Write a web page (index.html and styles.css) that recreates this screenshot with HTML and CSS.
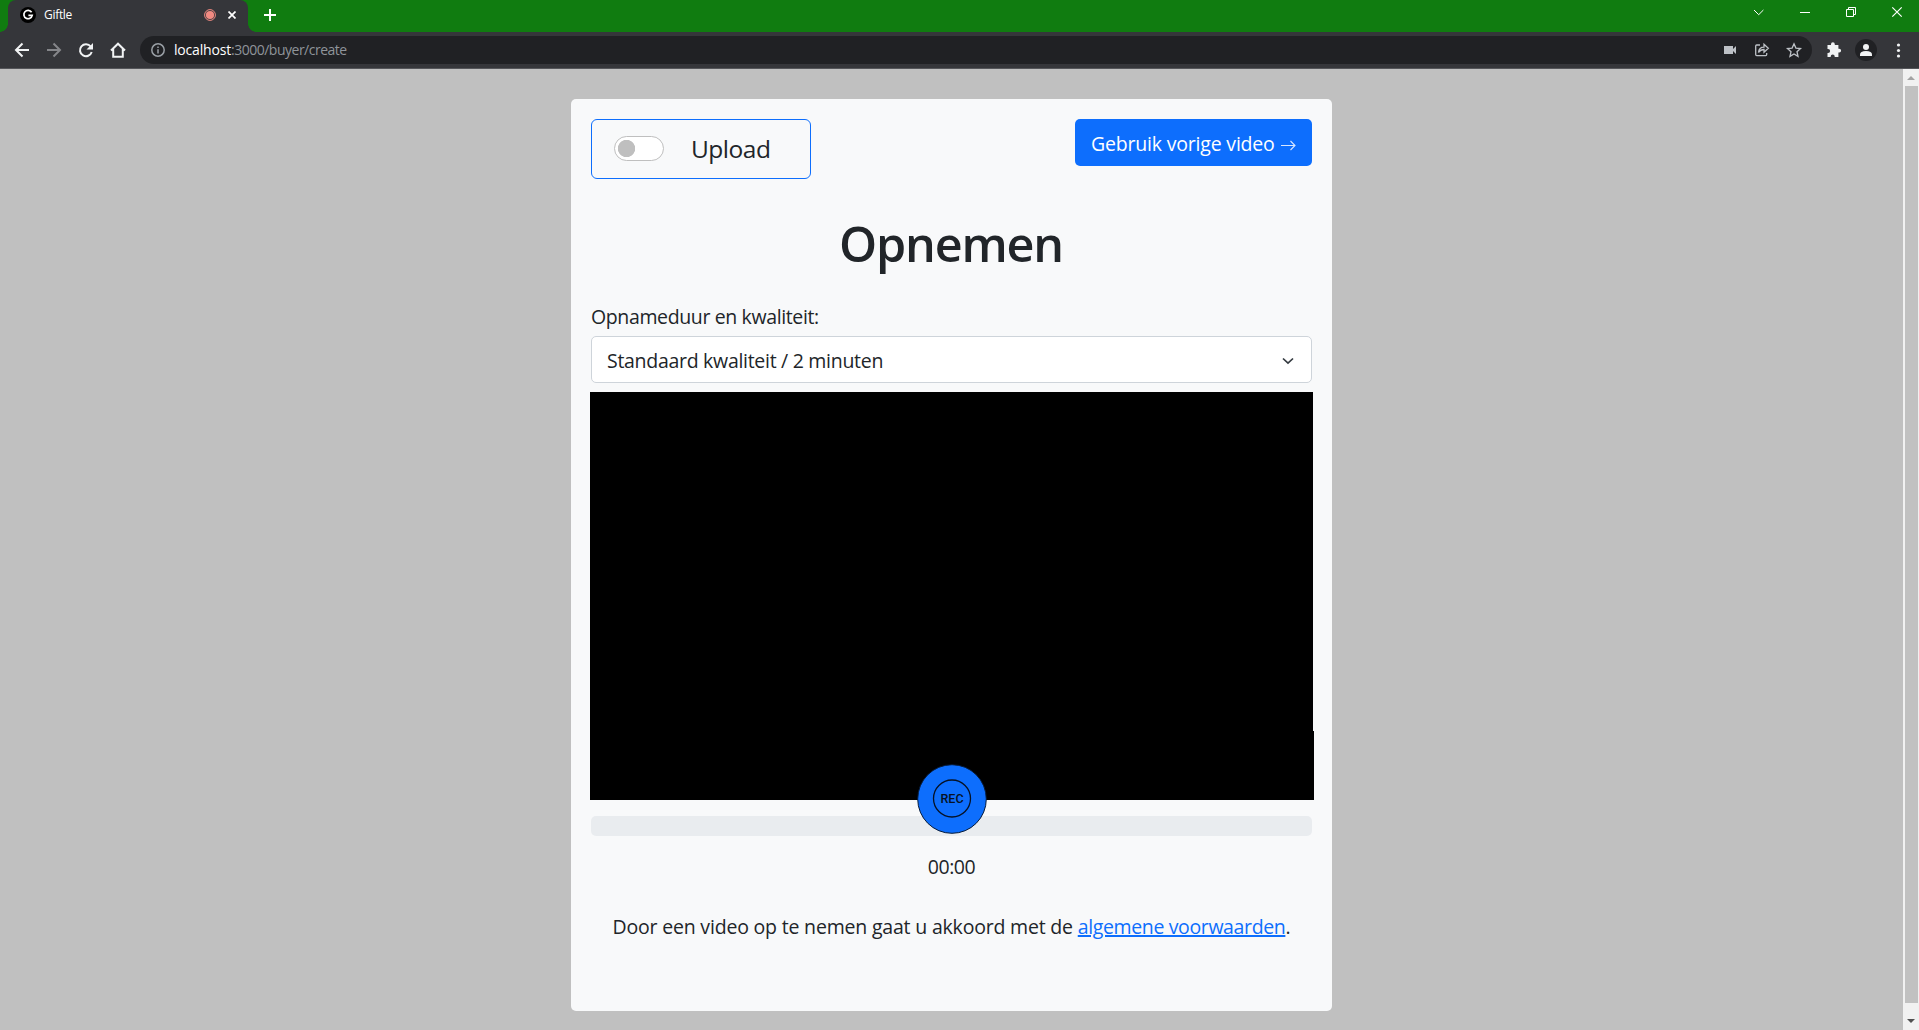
FILE: index.html
```html
<!DOCTYPE html>
<html lang="nl">
<head>
<meta charset="utf-8">
<title>Giftle</title>
<link rel="stylesheet" href="styles.css">
</head>
<body>
<header class="tabbar">
  <div class="tab">
    <svg class="favicon" width="16" height="16" viewBox="0 0 16 16"><circle cx="8" cy="8" r="8" fill="#000"/><path d="M11.6 5.2A4.2 4.2 0 1 0 12.2 8.4H8.4" fill="none" stroke="#fff" stroke-width="1.7"/></svg>
    <span class="tab-title">Giftle</span>
    <svg class="recording" width="12" height="12" viewBox="0 0 12 12"><circle cx="6" cy="6" r="5.4" fill="none" stroke="#f28b82" stroke-width="1"/><circle cx="6" cy="6" r="4.1" fill="#f28b82"/></svg>
    <svg class="tab-close" width="8" height="8" viewBox="0 0 8 8"><path d="M.5.5l7 7M7.5.5l-7 7" stroke="#fff" stroke-width="1.7"/></svg>
  </div>
  <svg class="new-tab" width="12" height="12" viewBox="0 0 12 12"><path d="M6 0v12M0 6h12" stroke="#fff" stroke-width="2"/></svg>
  <svg class="window-controls" width="150" height="24" viewBox="0 0 150 24" fill="none" stroke="#fff">
    <path d="M1 10l4.7 4.7L10.400 10"/>
    <path d="M47 12.500h10"/>
    <path d="M93.500 9.500h7v7h-7zM95.500 9.500v-2h7v7h-2"/>
    <path d="M139.300 7.300l9.400 9.400M148.700 7.300l-9.400 9.400" stroke-width="1.200"/>
  </svg>
</header>
<nav class="toolbar">
  <svg class="nav-icons" width="140" height="36" viewBox="0 0 140 36" fill="none" stroke="#f1f3f4" stroke-width="2">
    <path d="M29 18H16.500M22.500 11.500L16 18l6.500 6.500"/>
    <path d="M47 18h12.500M53.500 11.500L60 18l-6.500 6.500" stroke="#85868a"/>
    <path d="M90.700 14.500A6 6 0 1 0 91.700 20"/><path d="M93 11v6.500h-6.500z" fill="#f1f3f4" stroke="none"/>
    <path d="M111 18.500l7-6.800 7 6.800M113.200 17v7.800h9.600V17"/>
  </svg>
  <div class="omnibox">
    <svg width="14" height="14" viewBox="0 0 14 14" fill="none" stroke="#9aa0a6" stroke-width="1.500"><circle cx="7" cy="7" r="6.200"/><path d="M7 6.200v4.300M7 3.500v1.600"/></svg>
    <span class="url"><b>localhost</b>:3000/buyer/create</span>
    <svg class="page-actions" width="80" height="28" viewBox="0 0 80 28" fill="none" stroke="#bdc1c6" stroke-width="1.300">
      <path d="M0 10h9v3l3-3v8l-3-3v3H0z" fill="#bdc1c6" stroke="none"/>
      <path d="M36 9h-3.300q-1 0-1 1v8.600q0 1 1 1h9q1 0 1-1V17"/><path d="M34.500 16.500q.5-5.400 5.500-5.400V8.200l4.300 4-4.300 4v-2.700q-3.500 0-5.500 3z"/>
      <path d="M70 7.800l1.900 4.300 4.600.5-3.500 3.100 1 4.600-4-2.400-4 2.400 1-4.600-3.500-3.100 4.600-.5z"/>
    </svg>
  </div>
  <svg class="browser-actions" width="107" height="36" viewBox="0 0 107 36" fill="#f1f3f4">
    <path transform="translate(.5 0)" d="M15 13h3.500v-.8a1.900 1.900 0 0 1 3.800 0v.8h3.600v3.700h.8a1.900 1.900 0 0 1 0 3.800h-.8V25h-3.700v-.6a2 2 0 0 0-4 0v.6H15v-3.900h.6a2 2 0 0 0 0-4H15z"/>
    <circle cx="54" cy="18" r="11" fill="#202124"/><circle cx="54" cy="15" r="3"/><path d="M48 24v-1.500q0-3.500 6-3.500t6 3.500V24z"/>
    <circle cx="86.500" cy="13" r="1.600"/><circle cx="86.500" cy="18.500" r="1.600"/><circle cx="86.500" cy="24" r="1.600"/>
  </svg>
</nav>
<div class="viewport">
  <main class="page">
    <section class="card">
      <div class="card-top">
        <label class="mode"><span class="switch"></span><span class="mode-text">Upload</span></label>
        <button class="previous"><span class="previous-text">Gebruik vorige video</span><svg width="15" height="12" viewBox="0 0 15 12" fill="none" stroke="#d6e6ff" stroke-width="1.1"><path d="M0 5.500h13.500M9.500 1L14 5.500l-4.500 4.500"/></svg></button>
      </div>
      <h1 class="title">Opnemen</h1>
      <div class="field-label">Opnameduur en kwaliteit:</div>
      <div class="select"><span>Standaard kwaliteit / 2 minuten</span><svg width="12" height="8" viewBox="0 0 12 8"><path d="M1 1.500l5 4.700 5-4.700" fill="none" stroke="#343a40" stroke-width="1.700"/></svg></div>
      <div class="video">
        <button class="record"><svg width="70" height="70" viewBox="0 0 70 70"><circle cx="35" cy="35" r="34.300" fill="#0d6efd" stroke="#061a38" stroke-width="1"/><circle cx="35" cy="34.500" r="18.500" fill="none" stroke="#061225" stroke-width="1.300"/><text class="record-text" x="35" y="39" text-anchor="middle">REC</text></svg></button>
      </div>
      <div class="progress"></div>
      <div class="time">00:00</div>
      <p class="terms">Door een video op te nemen gaat u akkoord met de <a>algemene voorwaarden</a>.</p>
    </section>
  </main>
  <aside class="scrollbar"><i class="arrow up"></i><i class="thumb"></i><i class="arrow down"></i></aside>
</div>
</body>
</html>
```
FILE: styles.css
```css
* { box-sizing: border-box; }
body { margin: 0; width: 1919px; height: 1030px; overflow: hidden; font-family: "Open Sans", "Noto Sans", sans-serif; color: #212529; font-size: 19.5px; display: flex; flex-direction: column; }
svg { display: block; flex: none; }
button { border: 0; padding: 0; font: inherit; background: none; }
.tabbar { height: 32px; flex: none; background: #107c10; display: flex; align-items: flex-start; padding-left: 8px; }
.tab { position: relative; width: 240px; height: 32px; background: #35363a; border-radius: 8px 8px 0 0; display: flex; align-items: center; padding: 0 10px 3px 12px; }
.tab::before, .tab::after { content: ""; position: absolute; bottom: 0; width: 8px; height: 8px; }
.tab::before { left: -8px; background: radial-gradient(circle at 0 0, #107c10 7.5px, #35363a 8px); }
.tab::after { right: -8px; background: radial-gradient(circle at 100% 0, #107c10 7.5px, #35363a 8px); }
.tab-title { margin-left: 8px; flex: 1; color: #fff; font-size: 12px; letter-spacing: -.3px; }
.tab-close { margin: 1px 2px 0 12px; }
.new-tab { margin: 9px 0 0 16px; }
.window-controls { margin: 0 16px 0 auto; }
.toolbar { height: 37px; flex: none; background: #35363a; border-bottom: 1px solid #55565a; display: flex; }
.omnibox { width: 1672px; height: 28px; margin-top: 4px; border-radius: 14px; background: #202124; display: flex; align-items: center; padding-left: 11px; }
.url { font-size: 14px; line-height: 20px; letter-spacing: -.5px; margin-left: 9px; color: #8f949a; }
.url b { font-weight: 400; letter-spacing: -.18px; color: #fff; }
.page-actions { margin: 0 8px 0 auto; }
.viewport { flex: 1; display: flex; min-height: 0; }
.page { flex: 1; background: #c0c0c0; padding: 30px 0 0; display: flex; justify-content: center; align-items: flex-start; }
.card { width: 761px; height: 912px; background: #f8f9fa; border-radius: 5px; padding: 20px; }
.card-top { display: flex; justify-content: space-between; align-items: flex-start; height: 60px; }
.mode { width: 220px; height: 60px; border: 1px solid #0d6efd; border-radius: 6px; display: flex; align-items: center; padding: 0 0 1px 22px; }
.switch { width: 50px; height: 25px; border: 1px solid #bfbfbf; border-radius: 13px; background: radial-gradient(circle at 11.5px 11.5px, #bfbfbf 8.3px, #fff 9px); }
.mode-text { font-size: 24.5px; line-height: 38px; margin: 1px 0 0 27px; letter-spacing: -.5px; }
.previous { width: 237px; height: 47px; background: #0d6efd; border-radius: 5px; color: #fff; display: flex; align-items: center; padding-left: 16px; white-space: nowrap; text-align: left; }
.previous-text { width: 190px; padding-top: 2px; letter-spacing: -.19px; }
.previous svg { margin-top: 6px; }
.title { margin: 34px 0 0; height: 60px; font-size: 48.5px; line-height: 60px; font-weight: 600; text-align: center; letter-spacing: -1.2px; text-indent: -1px; }
.field-label { margin-top: 29px; height: 30px; line-height: 30px; white-space: nowrap; letter-spacing: -.37px; }
.select { height: 47px; margin-top: 4px; background: #fff; border: 1px solid #ced4da; border-radius: 5px; display: flex; align-items: center; justify-content: space-between; padding: 2px 17px 0 15px; letter-spacing: -.29px; }
.video { position: relative; height: 408px; margin: 9px -1px 0; background: #000; }
.video::after { content: ""; position: absolute; left: 100%; bottom: 0; width: 1px; height: 69px; background: #000; }
.record { position: absolute; left: 327px; top: 372px; }
.record-text { font: 500 12.5px Roboto, "Liberation Sans", sans-serif; letter-spacing: 0; fill: #061225; }
.progress { height: 20px; margin-top: 16px; border-radius: 5px; background: #e9ecef; }
.time { margin-top: 16px; line-height: 30px; text-align: center; letter-spacing: -.45px; }
.terms { margin: 30px 0 0; line-height: 30px; white-space: nowrap; padding-left: 21.5px; letter-spacing: -.19px; }
.terms a { color: #0d6efd; text-decoration: underline; text-decoration-thickness: 2px; text-underline-offset: 1px; letter-spacing: -.37px; }
.scrollbar { width: 16px; background: #f1f1f1; display: flex; flex-direction: column; align-items: center; }
.thumb { width: 13px; height: 917px; margin: 6px 0 0 1px; background: #c1c1c1; }
.arrow { border: 4px solid transparent; width: 0; height: 0; }
.up { margin-top: 3px; border-bottom-color: #a3a3a3; }
.down { margin-top: 16px; border-top-color: #505050; }
```
